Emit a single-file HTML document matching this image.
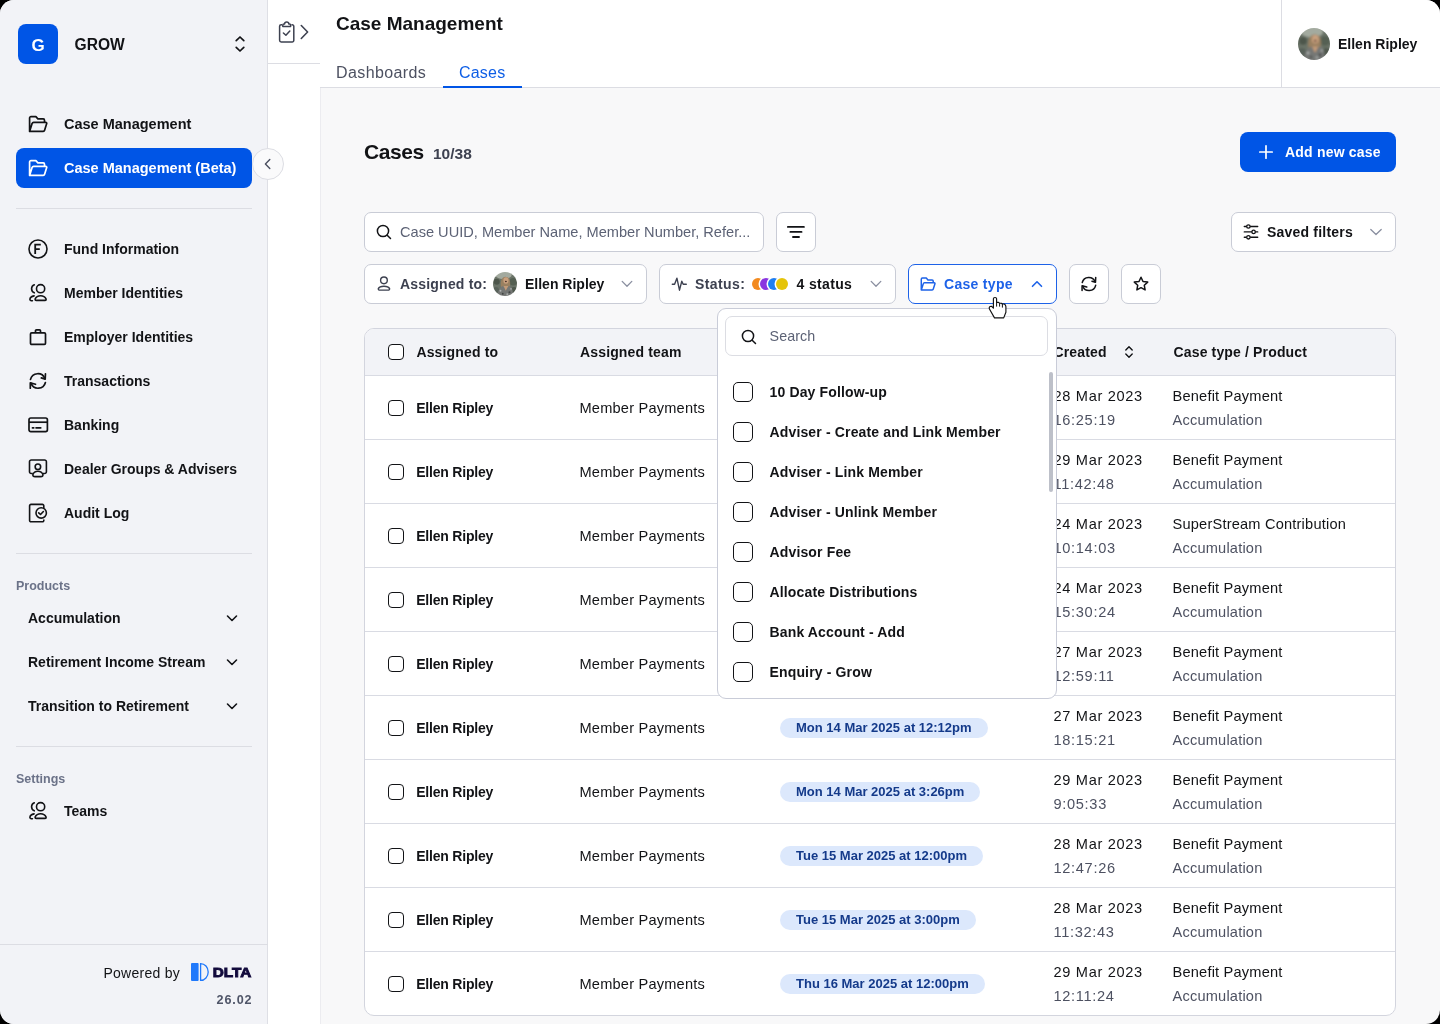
<!DOCTYPE html>
<html><head><meta charset="utf-8">
<style>
*{box-sizing:border-box;margin:0;padding:0}
html,body{width:1440px;height:1024px;overflow:hidden;background:#000}
body{font-family:"Liberation Sans",sans-serif;color:#121316;position:relative}
#app{position:absolute;left:0;top:0;width:1440px;height:1024px;border-radius:14px;overflow:hidden;background:#f8f8f9;will-change:transform}
.abs{position:absolute}
.t{position:absolute;white-space:nowrap;line-height:1}
svg{position:absolute;overflow:visible}
/* sidebar */
#side{position:absolute;left:0;top:0;width:268px;height:1024px;background:#f2f3f7;border-right:1px solid #dedfe5}
.nav{font-weight:bold;font-size:14px;color:#121316}
.divh{position:absolute;height:1px;background:#dcdde3}
#col2{position:absolute;left:268px;top:0;width:53px;height:1024px;background:#fff;border-right:1px solid #ececf0}
#hdr{position:absolute;left:320px;top:0;width:1120px;height:88px;background:#fff;border-bottom:1px solid #dcdde3}

.box{position:absolute;background:#fff;border:1px solid #c9ccd6;border-radius:7px}
.avatar{position:absolute;border-radius:50%;background:radial-gradient(circle at 50% 40%,#c9a88a 0,#9a8870 18%,#6f7a6a 40%,#4a5548 70%,#3a4338 100%)}
.dot{position:absolute;width:12.4px;height:12.4px;border-radius:50%;box-shadow:-0.6px 0 0 0.9px #fff}
#tbl{position:absolute;left:364px;top:328px;width:1032px;height:688px;background:#fff;border:1px solid #d3d5de;border-radius:10px;overflow:hidden}
.thead{position:absolute;left:0;top:0;width:100%;height:47px;background:#f2f3f7;border-bottom:1px solid #d9dbe3}
.row{position:absolute;left:0;width:100%;height:64px;border-bottom:1px solid #d9dbe3}
.cb{position:absolute;width:16px;height:16px;border:1.5px solid #121316;border-radius:4px;background:#fff}
.bold{font-size:14px;font-weight:bold;color:#121316}
.reg{font-size:14.6px;color:#121316;letter-spacing:0.2px}
.gray{color:#4d5161}
.dt{letter-spacing:0.68px}
.pill{position:absolute;height:20px;padding:0 16px;border-radius:10px;background:#dce8fc;color:#143a8a;font-size:13px;font-weight:bold;line-height:20px;white-space:nowrap}

#dd{position:absolute;left:717px;top:308px;width:340px;height:391px;background:#fff;border:1.5px solid #c9ccd8;border-radius:9px}
.ddi{letter-spacing:0.15px}
.cb2{position:absolute;width:20px;height:20px;border:1.5px solid #121316;border-radius:5px;background:#fff}
</style></head>
<body><div id="app">

<div id="side">
  <div class="abs" style="left:18px;top:24px;width:40px;height:40px;border-radius:8px;background:#0055e6"></div>
  <div class="t" style="left:31.5px;top:36.5px;font-size:17px;font-weight:bold;color:#fff">G</div>
  <div class="t" style="left:74.5px;top:37px;font-size:15.6px;font-weight:bold;color:#121316">GROW</div>

  <div class="t nav" style="left:64px;top:116.6px;font-size:14.5px">Case Management</div>
  <div class="abs" style="left:16px;top:148px;width:236px;height:40px;border-radius:8px;background:#0055e6"></div>
  <div class="t nav" style="left:64px;top:160.6px;color:#fff;font-size:14.5px">Case Management (Beta)</div>
  <div class="divh" style="left:16px;top:208px;width:236px"></div>

  <div class="t nav" style="left:64px;top:242.3px">Fund Information</div>
  <div class="t nav" style="left:64px;top:286.3px">Member Identities</div>
  <div class="t nav" style="left:64px;top:330.3px">Employer Identities</div>
  <div class="t nav" style="left:64px;top:374.3px">Transactions</div>
  <div class="t nav" style="left:64px;top:418.3px">Banking</div>
  <div class="t nav" style="left:64px;top:462.3px">Dealer Groups &amp; Advisers</div>
  <div class="t nav" style="left:64px;top:506.3px">Audit Log</div>
  <div class="divh" style="left:16px;top:553px;width:236px"></div>

  <div class="t" style="left:16px;top:580px;font-size:12.5px;font-weight:bold;color:#6b7288">Products</div>
  <div class="t nav" style="left:28px;top:611.3px">Accumulation</div>
  <div class="t nav" style="left:28px;top:655.3px">Retirement Income Stream</div>
  <div class="t nav" style="left:28px;top:699.3px">Transition to Retirement</div>
  <div class="divh" style="left:16px;top:746px;width:236px"></div>

  <div class="t" style="left:16px;top:773px;font-size:12.5px;font-weight:bold;color:#6b7288">Settings</div>
  <div class="t nav" style="left:64px;top:804.3px">Teams</div>

  <div class="divh" style="left:0;top:944px;width:268px"></div>
  <div class="t" style="left:103.5px;top:966px;font-size:14px;color:#121316;letter-spacing:0.25px">Powered by</div>
  <div class="t" style="left:216.5px;top:994px;font-size:12.6px;font-weight:bold;color:#4f5568;letter-spacing:0.9px">26.02</div>
</div>

<div id="col2">
  <div class="divh" style="left:0;top:63px;width:52px;background:#dcdde3"></div>
</div>

<div id="hdr">
  <div class="t" style="left:16px;top:14px;font-size:19px;font-weight:bold;color:#121316;letter-spacing:0px">Case Management</div>
  <div class="t" style="left:16px;top:65px;font-size:16px;color:#4d5161;letter-spacing:0.4px">Dashboards</div>
  <div class="t" style="left:139px;top:65px;font-size:16px;color:#0d5ee6;letter-spacing:0.2px">Cases</div>
  <div class="abs" style="left:123px;top:86px;width:79px;height:2px;background:#0055e6"></div>
  <div class="abs" style="left:961px;top:0;width:1px;height:88px;background:#dcdde3"></div>
  <div class="t" style="left:1018px;top:37px;font-size:14px;font-weight:bold;color:#121316">Ellen Ripley</div>
</div>

<div id="main">
  <div class="t" style="left:364px;top:141px;font-size:21px;font-weight:bold;color:#121316;letter-spacing:-0.4px">Cases</div>
  <div class="t" style="left:433px;top:145.5px;font-size:15.5px;font-weight:bold;color:#3d4150">10/38</div>

  <div class="abs" style="left:1240px;top:132px;width:156px;height:40px;border-radius:8px;background:#0055e6"></div>
  <svg style="left:1259px;top:145px" width="14" height="14" viewBox="0 0 14 14"><path d="M7 0.8V13.2M0.8 7H13.2" stroke="#fff" stroke-width="1.7" stroke-linecap="round"/></svg>
  <div class="t" style="left:1285px;top:145px;font-size:14px;font-weight:bold;color:#fff;letter-spacing:0.2px">Add new case</div>

  <div class="box" style="left:364px;top:212px;width:400px;height:40px"></div>
  <svg style="left:376px;top:224px" width="16" height="16" viewBox="0 0 16 16"><circle cx="7" cy="7" r="5.6" fill="none" stroke="#121316" stroke-width="1.5"/><path d="M11.2 11.2L14.5 14.5" stroke="#121316" stroke-width="1.5" stroke-linecap="round"/></svg>
  <div class="t" style="left:400px;top:225px;font-size:14.6px;color:#5c6275">Case UUID, Member Name, Member Number, Refer...</div>

  <div class="box" style="left:776px;top:212px;width:40px;height:40px"></div>
  <svg style="left:776px;top:212px" width="40" height="40" viewBox="0 0 40 40"><path d="M11.9 14.9H27.9M14.4 19.9H25.5M17 25H23" stroke="#121316" stroke-width="1.9" stroke-linecap="round"/></svg>

  <div class="box" style="left:1231px;top:212px;width:165px;height:40px"></div>
  <svg style="left:1238px;top:218px" width="24" height="28" viewBox="0 0 24 28"><path d="M6.3 8.5H19.7M6.3 13.9H19.7M6.3 19.3H19.7" stroke="#121316" stroke-width="1.4" stroke-linecap="round"/><circle cx="10.4" cy="8.5" r="1.7" fill="#fff" stroke="#121316" stroke-width="1.3"/><circle cx="15.6" cy="13.9" r="1.7" fill="#fff" stroke="#121316" stroke-width="1.3"/><circle cx="10.4" cy="19.3" r="1.7" fill="#fff" stroke="#121316" stroke-width="1.3"/></svg>
  <div class="t" style="left:1267px;top:225px;font-size:14px;font-weight:bold;color:#121316;letter-spacing:0.2px">Saved filters</div>
  <svg style="left:1368px;top:226px" width="16" height="12" viewBox="0 0 16 12"><path d="M2.8 3.5L8 8.5L13.2 3.5" fill="none" stroke="#8a8fa0" stroke-width="1.3" stroke-linecap="round" stroke-linejoin="round"/></svg>

  <!-- filter chips -->
  <div class="box" style="left:364px;top:264px;width:283px;height:40px"></div>
  <svg style="left:375px;top:275px" width="18" height="18" viewBox="0 0 18 18"><circle cx="8.95" cy="5.35" r="3.35" fill="none" stroke="#3d4150" stroke-width="1.4"/><path d="M5 15.1H12.9Q14.8 15.1 14.6 13.6Q13.4 11.2 8.95 11.2Q4.5 11.2 3.3 13.6Q3.1 15.1 5 15.1z" fill="none" stroke="#3d4150" stroke-width="1.4" stroke-linejoin="round"/></svg>
  <div class="t" style="left:400px;top:276.6px;font-size:14px;font-weight:bold;color:#3d4150;letter-spacing:0.2px">Assigned to:</div>
  <svg style="left:493px;top:272px" width="24" height="24" viewBox="0 0 32 32"><defs><filter id="bl2" x="-10%" y="-10%" width="120%" height="120%"><feGaussianBlur stdDeviation="0.9"/></filter><clipPath id="ac2"><circle cx="16" cy="16" r="16"/></clipPath></defs><g clip-path="url(#ac2)"><g filter="url(#bl2)"><rect x="-2" y="-2" width="36" height="36" fill="#6b7368"/><ellipse cx="14" cy="3.5" rx="11" ry="6" fill="#a3aa9f"/><circle cx="5" cy="13" r="4" fill="#4d564b"/><circle cx="27" cy="13" r="5" fill="#556052"/><circle cx="28" cy="24" r="4" fill="#4f584d"/><circle cx="4" cy="24" r="4" fill="#59625a"/><path d="M11 22C9 14 11 6 17.5 6.5C23 7 23.5 13 22.5 19C21 20 20 20 19 19L16 19z" fill="#9a8060"/><ellipse cx="17.3" cy="11.3" rx="3.4" ry="4.3" fill="#c9a07e"/><ellipse cx="17.2" cy="12.7" rx="1.2" ry="1" fill="#3a2620"/><path d="M6 34C6 24 10 18.5 14 18.5L17 25L20.5 18.5C25 18.5 27 24 27 34z" fill="#747775"/><path d="M14 18.5L17 25L20.5 18.5z" fill="#c39a78"/><circle cx="10" cy="25" r="1.3" fill="#b3b6b4"/><circle cx="22" cy="27" r="1.4" fill="#434544"/><circle cx="13" cy="29" r="1.2" fill="#434544"/><circle cx="24" cy="22.5" r="1.1" fill="#b0b3b1"/><circle cx="19" cy="29.5" r="1.2" fill="#a9acaa"/></g></g></svg>
  <div class="t" style="left:525px;top:276.6px;font-size:14px;font-weight:bold;color:#121316">Ellen Ripley</div>
  <svg style="left:619px;top:278px" width="16" height="12" viewBox="0 0 16 12"><path d="M3.2 3.4L8 8.2L12.8 3.4" fill="none" stroke="#8a8fa0" stroke-width="1.3" stroke-linecap="round" stroke-linejoin="round"/></svg>

  <div class="box" style="left:659px;top:264px;width:237px;height:40px"></div>
  <svg style="left:670.5px;top:276px" width="17" height="16" viewBox="0 0 17 16"><path d="M1.3 8.2H3.6L5.9 2.2L8.5 14.2L10.8 5.2L12.2 8.2H15.3" fill="none" stroke="#3d4150" stroke-width="1.4" stroke-linecap="round" stroke-linejoin="round"/></svg>
  <div class="t" style="left:695px;top:276.6px;font-size:14px;font-weight:bold;color:#3d4150;letter-spacing:0.4px">Status:</div>
  <div class="dot" style="left:752px;top:277.6px;background:#f28a1f"></div>
  <div class="dot" style="left:760px;top:277.6px;background:#8a36e0"></div>
  <div class="dot" style="left:768px;top:277.6px;background:#1f7ef0"></div>
  <div class="dot" style="left:776px;top:277.6px;background:#e5c409"></div>
  <div class="t" style="left:796.5px;top:276.6px;font-size:14px;font-weight:bold;color:#121316;letter-spacing:0.35px">4 status</div>
  <svg style="left:868px;top:278px" width="16" height="12" viewBox="0 0 16 12"><path d="M3.2 3.4L8 8.2L12.8 3.4" fill="none" stroke="#8a8fa0" stroke-width="1.3" stroke-linecap="round" stroke-linejoin="round"/></svg>

  <div class="box" style="left:908px;top:264px;width:149px;height:40px;border:1.5px solid #1d62e8"></div>
  <svg style="left:920px;top:276px" width="16" height="16" viewBox="0 0 20 20"><path d="M1.6 17.4V4A1.4 1.4 0 0 1 3 2.6H7.9L9.9 4.9H15.2A1.3 1.3 0 0 1 16.5 6.2V8.3M1.6 17.4L4.1 9.6A1.7 1.7 0 0 1 5.7 8.3H17.7A1 1 0 0 1 18.7 9.6L16.6 16.3A1.5 1.5 0 0 1 15.2 17.4z" fill="none" stroke="#1d62e8" stroke-width="1.85" stroke-linejoin="round"/></svg>
  <div class="t" style="left:944px;top:276.6px;font-size:14px;font-weight:bold;color:#1d62e8;letter-spacing:0.3px">Case type</div>
  <svg style="left:1029px;top:278px" width="16" height="12" viewBox="0 0 16 12"><path d="M3.5 8.3L8 3.8L12.5 8.3" fill="none" stroke="#1d62e8" stroke-width="1.6" stroke-linecap="round" stroke-linejoin="round"/></svg>

  <div class="box" style="left:1069px;top:264px;width:40px;height:40px"></div>
  <svg style="left:1080.1px;top:274.9px" width="18" height="18" viewBox="0 0 20 20"><path d="M2.5 8.4A7.5 7.5 0 0 1 16.8 7.6M17.4 11.5A7.5 7.5 0 0 1 3.1 12.4" fill="none" stroke="#121316" stroke-width="1.7" stroke-linecap="round"/><path d="M17.45 2.8L17.2 8.1L13.3 6.9M2.3 17.2L2.3 11.9L7.5 13.3" fill="none" stroke="#121316" stroke-width="1.7" stroke-linecap="round" stroke-linejoin="round"/></svg>
  <div class="box" style="left:1121px;top:264px;width:40px;height:40px"></div>
  <svg style="left:1131px;top:274px" width="20" height="20" viewBox="0 0 20 20"><path d="M10 3.2L12 7.5L16.7 8.1L13.3 11.3L14.1 15.9L10 13.7L5.9 15.9L6.7 11.3L3.3 8.1L8 7.5z" fill="none" stroke="#121316" stroke-width="1.5" stroke-linejoin="round"/></svg>

  <!-- table -->
  <div id="tbl">
    <div class="thead"></div>
    <div class="cb" style="left:23px;top:15px"></div>
    <div class="t bold" style="left:51.4px;letter-spacing:0.15px;top:15.6px">Assigned to</div>
    <div class="t bold" style="left:215px;letter-spacing:0.15px;top:15.6px">Assigned team</div>
    <div class="t bold" style="left:688.5px;letter-spacing:0.15px;top:15.6px">Created</div>
    <svg style="left:759px;top:16px" width="10" height="14" viewBox="0 0 10 14"><path d="M1.8 5L5 1.8L8.2 5M1.8 9L5 12.2L8.2 9" fill="none" stroke="#121316" stroke-width="1.4" stroke-linecap="round" stroke-linejoin="round"/></svg>
    <div class="t bold" style="left:808.5px;letter-spacing:0.15px;top:15.6px">Case type / Product</div>
<div class="row" style="top:47px"><div class="cb" style="left:23px;top:24px"></div><div class="t bold" style="left:51.2px;top:25px;letter-spacing:-0.2px">Ellen Ripley</div><div class="t reg" style="left:214.5px;top:25px">Member Payments</div><div class="t reg dt" style="left:688.5px;top:13px">28 Mar 2023</div><div class="t reg gray dt" style="left:688.5px;top:37px">16:25:19</div><div class="t reg" style="left:807.5px;top:13px">Benefit Payment</div><div class="t reg gray" style="left:807.5px;top:37px">Accumulation</div></div>
<div class="row" style="top:111px"><div class="cb" style="left:23px;top:24px"></div><div class="t bold" style="left:51.2px;top:25px;letter-spacing:-0.2px">Ellen Ripley</div><div class="t reg" style="left:214.5px;top:25px">Member Payments</div><div class="t reg dt" style="left:688.5px;top:13px">29 Mar 2023</div><div class="t reg gray dt" style="left:688.5px;top:37px">11:42:48</div><div class="t reg" style="left:807.5px;top:13px">Benefit Payment</div><div class="t reg gray" style="left:807.5px;top:37px">Accumulation</div></div>
<div class="row" style="top:175px"><div class="cb" style="left:23px;top:24px"></div><div class="t bold" style="left:51.2px;top:25px;letter-spacing:-0.2px">Ellen Ripley</div><div class="t reg" style="left:214.5px;top:25px">Member Payments</div><div class="t reg dt" style="left:688.5px;top:13px">24 Mar 2023</div><div class="t reg gray dt" style="left:688.5px;top:37px">10:14:03</div><div class="t reg" style="left:807.5px;top:13px">SuperStream Contribution</div><div class="t reg gray" style="left:807.5px;top:37px">Accumulation</div></div>
<div class="row" style="top:239px"><div class="cb" style="left:23px;top:24px"></div><div class="t bold" style="left:51.2px;top:25px;letter-spacing:-0.2px">Ellen Ripley</div><div class="t reg" style="left:214.5px;top:25px">Member Payments</div><div class="t reg dt" style="left:688.5px;top:13px">24 Mar 2023</div><div class="t reg gray dt" style="left:688.5px;top:37px">15:30:24</div><div class="t reg" style="left:807.5px;top:13px">Benefit Payment</div><div class="t reg gray" style="left:807.5px;top:37px">Accumulation</div></div>
<div class="row" style="top:303px"><div class="cb" style="left:23px;top:24px"></div><div class="t bold" style="left:51.2px;top:25px;letter-spacing:-0.2px">Ellen Ripley</div><div class="t reg" style="left:214.5px;top:25px">Member Payments</div><div class="t reg dt" style="left:688.5px;top:13px">27 Mar 2023</div><div class="t reg gray dt" style="left:688.5px;top:37px">12:59:11</div><div class="t reg" style="left:807.5px;top:13px">Benefit Payment</div><div class="t reg gray" style="left:807.5px;top:37px">Accumulation</div></div>
<div class="row" style="top:367px"><div class="cb" style="left:23px;top:24px"></div><div class="t bold" style="left:51.2px;top:25px;letter-spacing:-0.2px">Ellen Ripley</div><div class="t reg" style="left:214.5px;top:25px">Member Payments</div><div class="pill" style="left:415px;top:22px">Mon 14 Mar 2025 at 12:12pm</div><div class="t reg dt" style="left:688.5px;top:13px">27 Mar 2023</div><div class="t reg gray dt" style="left:688.5px;top:37px">18:15:21</div><div class="t reg" style="left:807.5px;top:13px">Benefit Payment</div><div class="t reg gray" style="left:807.5px;top:37px">Accumulation</div></div>
<div class="row" style="top:431px"><div class="cb" style="left:23px;top:24px"></div><div class="t bold" style="left:51.2px;top:25px;letter-spacing:-0.2px">Ellen Ripley</div><div class="t reg" style="left:214.5px;top:25px">Member Payments</div><div class="pill" style="left:415px;top:22px">Mon 14 Mar 2025 at 3:26pm</div><div class="t reg dt" style="left:688.5px;top:13px">29 Mar 2023</div><div class="t reg gray dt" style="left:688.5px;top:37px">9:05:33</div><div class="t reg" style="left:807.5px;top:13px">Benefit Payment</div><div class="t reg gray" style="left:807.5px;top:37px">Accumulation</div></div>
<div class="row" style="top:495px"><div class="cb" style="left:23px;top:24px"></div><div class="t bold" style="left:51.2px;top:25px;letter-spacing:-0.2px">Ellen Ripley</div><div class="t reg" style="left:214.5px;top:25px">Member Payments</div><div class="pill" style="left:415px;top:22px">Tue 15 Mar 2025 at 12:00pm</div><div class="t reg dt" style="left:688.5px;top:13px">28 Mar 2023</div><div class="t reg gray dt" style="left:688.5px;top:37px">12:47:26</div><div class="t reg" style="left:807.5px;top:13px">Benefit Payment</div><div class="t reg gray" style="left:807.5px;top:37px">Accumulation</div></div>
<div class="row" style="top:559px"><div class="cb" style="left:23px;top:24px"></div><div class="t bold" style="left:51.2px;top:25px;letter-spacing:-0.2px">Ellen Ripley</div><div class="t reg" style="left:214.5px;top:25px">Member Payments</div><div class="pill" style="left:415px;top:22px">Tue 15 Mar 2025 at 3:00pm</div><div class="t reg dt" style="left:688.5px;top:13px">28 Mar 2023</div><div class="t reg gray dt" style="left:688.5px;top:37px">11:32:43</div><div class="t reg" style="left:807.5px;top:13px">Benefit Payment</div><div class="t reg gray" style="left:807.5px;top:37px">Accumulation</div></div>
<div class="row" style="top:623px"><div class="cb" style="left:23px;top:24px"></div><div class="t bold" style="left:51.2px;top:25px;letter-spacing:-0.2px">Ellen Ripley</div><div class="t reg" style="left:214.5px;top:25px">Member Payments</div><div class="pill" style="left:415px;top:22px">Thu 16 Mar 2025 at 12:00pm</div><div class="t reg dt" style="left:688.5px;top:13px">29 Mar 2023</div><div class="t reg gray dt" style="left:688.5px;top:37px">12:11:24</div><div class="t reg" style="left:807.5px;top:13px">Benefit Payment</div><div class="t reg gray" style="left:807.5px;top:37px">Accumulation</div></div>
  </div>
</div>


<!-- dropdown -->
<div id="dd">
  <div class="abs" style="left:6.7px;top:7px;width:323.6px;height:40px;border:1px solid #dcdde3;border-radius:7px;background:#fff"></div>
  <svg style="left:23px;top:19.5px" width="16" height="16" viewBox="0 0 16 16"><circle cx="7" cy="7" r="5.6" fill="none" stroke="#121316" stroke-width="1.5"/><path d="M11.2 11.2L14.5 14.5" stroke="#121316" stroke-width="1.5" stroke-linecap="round"/></svg>
  <div class="t" style="left:51.5px;top:20px;font-size:14.3px;color:#5c6275;letter-spacing:0.1px">Search</div>
  <div class="abs" style="left:331px;top:63px;width:4px;height:120px;border-radius:2px;background:#bdc0c9"></div>
<div class="cb2" style="left:15px;top:73px"></div><div class="t bold ddi" style="left:51.5px;top:76px">10 Day Follow-up</div>
<div class="cb2" style="left:15px;top:113px"></div><div class="t bold ddi" style="left:51.5px;top:116px">Adviser - Create and Link Member</div>
<div class="cb2" style="left:15px;top:153px"></div><div class="t bold ddi" style="left:51.5px;top:156px">Adviser - Link Member</div>
<div class="cb2" style="left:15px;top:193px"></div><div class="t bold ddi" style="left:51.5px;top:196px">Adviser - Unlink Member</div>
<div class="cb2" style="left:15px;top:233px"></div><div class="t bold ddi" style="left:51.5px;top:236px">Advisor Fee</div>
<div class="cb2" style="left:15px;top:273px"></div><div class="t bold ddi" style="left:51.5px;top:276px">Allocate Distributions</div>
<div class="cb2" style="left:15px;top:313px"></div><div class="t bold ddi" style="left:51.5px;top:316px">Bank Account - Add</div>
<div class="cb2" style="left:15px;top:353px"></div><div class="t bold ddi" style="left:51.5px;top:356px">Enquiry - Grow</div>
</div>

<!-- sidebar icons -->
<svg style="left:28px;top:114px" width="20" height="20" viewBox="0 0 20 20"><path d="M1.6 17.4V4A1.4 1.4 0 0 1 3 2.6H7.9L9.9 4.9H15.2A1.3 1.3 0 0 1 16.5 6.2V8.3M1.6 17.4L4.1 9.6A1.7 1.7 0 0 1 5.7 8.3H17.7A1 1 0 0 1 18.7 9.6L16.6 16.3A1.5 1.5 0 0 1 15.2 17.4z" fill="none" stroke="#121316" stroke-width="1.7" stroke-linejoin="round"/></svg>
<svg style="left:28px;top:158px" width="20" height="20" viewBox="0 0 20 20"><path d="M1.6 17.4V4A1.4 1.4 0 0 1 3 2.6H7.9L9.9 4.9H15.2A1.3 1.3 0 0 1 16.5 6.2V8.3M1.6 17.4L4.1 9.6A1.7 1.7 0 0 1 5.7 8.3H17.7A1 1 0 0 1 18.7 9.6L16.6 16.3A1.5 1.5 0 0 1 15.2 17.4z" fill="none" stroke="#fff" stroke-width="1.7" stroke-linejoin="round"/></svg>
<svg style="left:28px;top:239px" width="20" height="20" viewBox="0 0 20 20"><circle cx="10" cy="10" r="9" fill="none" stroke="#121316" stroke-width="1.6"/><path d="M7.2 15V5.6H12.8M7.2 10.2H11.8" fill="none" stroke="#121316" stroke-width="1.8"/></svg>
<svg style="left:28px;top:283px" width="20" height="20" viewBox="0 0 20 20"><circle cx="12.6" cy="5.7" r="4.1" fill="none" stroke="#121316" stroke-width="1.6"/><path d="M8.3 17.4H17Q18.5 17.4 18 15.9Q16.6 12.8 12.6 12.8Q8.6 12.8 7.2 15.9Q6.8 17.4 8.3 17.4z" fill="none" stroke="#121316" stroke-width="1.6" stroke-linejoin="round"/><path d="M6.3 1.8A4.3 4.3 0 0 0 6.3 9.8M6.1 12.9Q2.2 13.6 1.9 16.3Q1.8 17.6 4.4 17.8" fill="none" stroke="#121316" stroke-width="1.6" stroke-linecap="round"/></svg>
<svg style="left:28px;top:327px" width="20" height="20" viewBox="0 0 20 20"><rect x="2.5" y="5.8" width="15" height="11.6" rx="1.2" fill="none" stroke="#121316" stroke-width="1.7"/><path d="M7.5 5.8V3.8A1 1 0 0 1 8.5 2.8H11.5A1 1 0 0 1 12.5 3.8V5.8" fill="none" stroke="#121316" stroke-width="1.7"/></svg>
<svg style="left:28px;top:371px" width="20" height="20" viewBox="0 0 20 20"><path d="M2.5 8.4A7.5 7.5 0 0 1 16.8 7.6M17.4 11.5A7.5 7.5 0 0 1 3.1 12.4" fill="none" stroke="#121316" stroke-width="1.7" stroke-linecap="round"/><path d="M17.45 2.8L17.2 8.1L13.3 6.9M2.3 17.2L2.3 11.9L7.5 13.3" fill="none" stroke="#121316" stroke-width="1.7" stroke-linecap="round" stroke-linejoin="round"/></svg>
<svg style="left:28px;top:415px" width="20" height="20" viewBox="0 0 20 20"><rect x="1" y="3" width="18.4" height="13.6" rx="1.8" fill="none" stroke="#121316" stroke-width="1.7"/><path d="M1 7.2H19.4" stroke="#121316" stroke-width="1.7"/><path d="M4.4 12.9H5.8M8 12.9H12.8" stroke="#121316" stroke-width="1.6" stroke-linecap="round"/></svg>
<svg style="left:28px;top:458.3px" width="20" height="20" viewBox="0 0 20 20"><path d="M4.8 15.5H3.3A1.8 1.8 0 0 1 1.5 13.7V3.8A1.8 1.8 0 0 1 3.3 2H16.6A1.8 1.8 0 0 1 18.4 3.8V13.7A1.8 1.8 0 0 1 16.6 15.5H15" fill="none" stroke="#121316" stroke-width="1.6"/><circle cx="9.9" cy="8.7" r="2.75" fill="none" stroke="#121316" stroke-width="1.6"/><path d="M7 18.6H12.8Q15.2 18.6 14.9 16.6Q13.8 13.2 9.9 13.2Q6 13.2 4.9 16.6Q4.6 18.6 7 18.6z" fill="none" stroke="#121316" stroke-width="1.6" stroke-linejoin="round"/></svg>
<svg style="left:28px;top:503px" width="20" height="20" viewBox="0 0 20 20"><path d="M15.8 5.6V2.8A1.4 1.4 0 0 0 14.4 1.4H3A1.4 1.4 0 0 0 1.6 2.8V17.4A1.4 1.4 0 0 0 3 18.8H14.4A1.4 1.4 0 0 0 15.8 17.4V16.4" fill="none" stroke="#121316" stroke-width="1.6"/><circle cx="13.2" cy="9.9" r="5.2" fill="#f2f3f7" stroke="#121316" stroke-width="1.6"/><path d="M10.7 9.8L12.5 11.5L15.4 8.5" fill="none" stroke="#121316" stroke-width="1.6" stroke-linecap="round" stroke-linejoin="round"/></svg>
<svg style="left:28px;top:801px" width="20" height="20" viewBox="0 0 20 20"><circle cx="12.6" cy="5.7" r="4.1" fill="none" stroke="#121316" stroke-width="1.6"/><path d="M8.3 17.4H17Q18.5 17.4 18 15.9Q16.6 12.8 12.6 12.8Q8.6 12.8 7.2 15.9Q6.8 17.4 8.3 17.4z" fill="none" stroke="#121316" stroke-width="1.6" stroke-linejoin="round"/><path d="M6.3 1.8A4.3 4.3 0 0 0 6.3 9.8M6.1 12.9Q2.2 13.6 1.9 16.3Q1.8 17.6 4.4 17.8" fill="none" stroke="#121316" stroke-width="1.6" stroke-linecap="round"/></svg>
<!-- chevrons -->
<svg style="left:232px;top:34px" width="16" height="20" viewBox="0 0 16 20"><path d="M4.2 6.7L8 3L11.8 6.7M4.2 13.3L8 17L11.8 13.3" fill="none" stroke="#121316" stroke-width="1.7" stroke-linecap="round" stroke-linejoin="round"/></svg>
<svg style="left:224px;top:610px" width="16" height="16" viewBox="0 0 16 16"><path d="M3.5 6L8 10.5L12.5 6" fill="none" stroke="#121316" stroke-width="1.6" stroke-linecap="round" stroke-linejoin="round"/></svg>
<svg style="left:224px;top:654px" width="16" height="16" viewBox="0 0 16 16"><path d="M3.5 6L8 10.5L12.5 6" fill="none" stroke="#121316" stroke-width="1.6" stroke-linecap="round" stroke-linejoin="round"/></svg>
<svg style="left:224px;top:698px" width="16" height="16" viewBox="0 0 16 16"><path d="M3.5 6L8 10.5L12.5 6" fill="none" stroke="#121316" stroke-width="1.6" stroke-linecap="round" stroke-linejoin="round"/></svg>
<!-- DLTA -->
<svg style="left:190px;top:962px" width="64" height="20" viewBox="0 0 64 20"><rect x="1" y="1" width="7.6" height="18" rx="1" fill="#2079fb"/><path d="M10.6 1.6A7.6 8.4 0 0 1 10.6 18.4z" fill="none" stroke="#2079fb" stroke-width="1.3"/><text x="22.8" y="15.2" font-family="Liberation Sans" font-weight="bold" font-size="13.5" fill="#120a3c" stroke="#120a3c" stroke-width="0.9" textLength="38.5" lengthAdjust="spacingAndGlyphs">DLTA</text></svg>
<!-- col2 -->
<svg style="left:276px;top:20px" width="36" height="24" viewBox="0 0 36 24"><path d="M6 4.7H5.2A1.6 1.6 0 0 0 3.6 6.3V20.3A1.6 1.6 0 0 0 5.2 21.9H16.2A1.6 1.6 0 0 0 17.8 20.3V6.3A1.6 1.6 0 0 0 16.2 4.7H15.4" fill="none" stroke="#3d4150" stroke-width="1.5"/><path d="M6.8 6.6V5Q6.8 4 7.9 4H8.6A2.1 2.1 0 0 1 12.8 4H13.5Q14.6 4 14.6 5V6.6z" fill="none" stroke="#3d4150" stroke-width="1.5" stroke-linejoin="round"/><path d="M7.4 13L9.9 15.2L13.8 11" fill="none" stroke="#3d4150" stroke-width="1.5" stroke-linecap="round" stroke-linejoin="round"/><path d="M25.3 5.5L31.6 12L25.3 18.5" fill="none" stroke="#3d4150" stroke-width="1.6" stroke-linecap="round" stroke-linejoin="round"/></svg>
<!-- collapse btn -->
<div class="abs" style="left:252px;top:148px;width:32px;height:32px;border-radius:50%;background:#fafafb;border:1px solid #dcdde3"></div>
<svg style="left:260px;top:156px" width="16" height="16" viewBox="0 0 16 16"><path d="M9.8 3.6L5.4 8.1L9.8 12.6" fill="none" stroke="#4b5060" stroke-width="1.4" stroke-linecap="round" stroke-linejoin="round"/></svg>
<!-- header avatar -->
<svg style="left:1298px;top:28px" width="32" height="32" viewBox="0 0 32 32"><defs><filter id="bl1" x="-10%" y="-10%" width="120%" height="120%"><feGaussianBlur stdDeviation="0.9"/></filter><clipPath id="ac1"><circle cx="16" cy="16" r="16"/></clipPath></defs><g clip-path="url(#ac1)"><g filter="url(#bl1)"><rect x="-2" y="-2" width="36" height="36" fill="#6b7368"/><ellipse cx="14" cy="3.5" rx="11" ry="6" fill="#a3aa9f"/><circle cx="5" cy="13" r="4" fill="#4d564b"/><circle cx="27" cy="13" r="5" fill="#556052"/><circle cx="28" cy="24" r="4" fill="#4f584d"/><circle cx="4" cy="24" r="4" fill="#59625a"/><path d="M11 22C9 14 11 6 17.5 6.5C23 7 23.5 13 22.5 19C21 20 20 20 19 19L16 19z" fill="#9a8060"/><ellipse cx="17.3" cy="11.3" rx="3.4" ry="4.3" fill="#c9a07e"/><ellipse cx="17.2" cy="12.7" rx="1.2" ry="1" fill="#3a2620"/><path d="M6 34C6 24 10 18.5 14 18.5L17 25L20.5 18.5C25 18.5 27 24 27 34z" fill="#747775"/><path d="M14 18.5L17 25L20.5 18.5z" fill="#c39a78"/><circle cx="10" cy="25" r="1.3" fill="#b3b6b4"/><circle cx="22" cy="27" r="1.4" fill="#434544"/><circle cx="13" cy="29" r="1.2" fill="#434544"/><circle cx="24" cy="22.5" r="1.1" fill="#b0b3b1"/><circle cx="19" cy="29.5" r="1.2" fill="#a9acaa"/></g></g></svg>
<!-- cursor -->
<svg style="left:980px;top:290px" width="35" height="35" viewBox="0 0 35 35"><path d="M13.4 8.8Q13.4 7.5 15 7.5Q16.6 7.5 16.6 8.8V12.4H18.6L19.6 13.2H21.4L22.4 14H24.2Q25.9 14.8 25.9 16.8V22.2L23.7 27.9H14.5L9.3 18.8Q8.9 17.2 10 16.5L11.6 16.3L13.4 18.2z" fill="#fff" stroke="#111" stroke-width="1.15" stroke-linejoin="round"/><path d="M16.6 12.4V16.6M19.6 13.2V16.6M22.4 14V17.6" fill="none" stroke="#111" stroke-width="1"/></svg>

</div></body></html>
